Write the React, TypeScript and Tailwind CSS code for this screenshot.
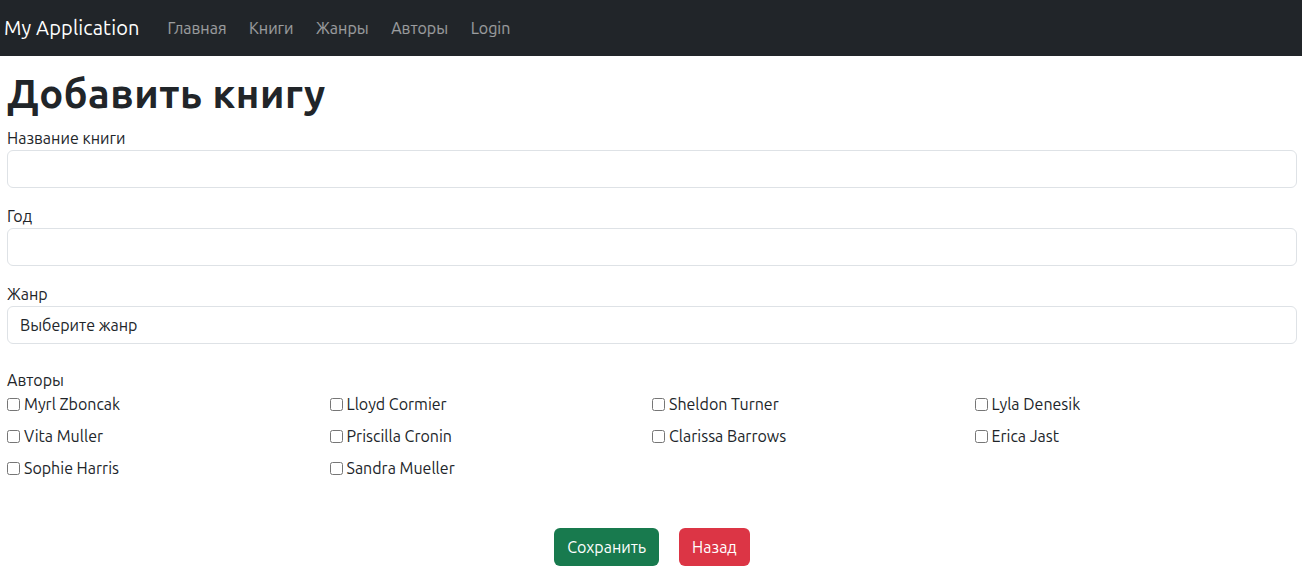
import { useState } from 'react';

const NAV_LINKS = ['Главная', 'Книги', 'Жанры', 'Авторы', 'Login'];

const AUTHORS = [
  'Myrl Zboncak',
  'Lloyd Cormier',
  'Sheldon Turner',
  'Lyla Denesik',
  'Vita Muller',
  'Priscilla Cronin',
  'Clarissa Barrows',
  'Erica Jast',
  'Sophie Harris',
  'Sandra Mueller',
];

const FONT = "font-['Ubuntu','Noto_Sans','Liberation_Sans',sans-serif]";

export default function App() {
  const [title, setTitle] = useState('');
  const [year, setYear] = useState('');
  const [checked, setChecked] = useState<string[]>([]);

  const toggle = (name: string) =>
    setChecked((prev) => (prev.includes(name) ? prev.filter((n) => n !== name) : [...prev, name]));

  return (
    <div className={`${FONT} min-h-[578px] bg-white text-[#212529]`}>
      {/* навбар */}
      <nav className="flex h-14 items-center bg-[#212529] pl-1">
        <span className="mr-7 text-[20px] leading-[30px] tracking-[0.15px] text-white">My Application</span>
        <div className="flex gap-[22.5px]">
          {NAV_LINKS.map((l) => (
            <a key={l} href="#" className="text-[16px] leading-6 text-white/55">
              {l}
            </a>
          ))}
        </div>
      </nav>

      <main className="pl-[7px] pr-[5px]">
        <h1 className="mb-2 mt-[14px] text-[40px] font-bold leading-[48px] tracking-[0.5px]">Добавить книгу</h1>

        <div className="mb-4">
          <label className="block text-[16px] leading-6">Название книги</label>
          <input
            value={title}
            onChange={(e) => setTitle(e.target.value)}
            className="block h-[38px] w-full rounded-[6px] border border-[#dee2e6] px-3 outline-none"
          />
        </div>

        <div className="mb-4">
          <label className="block text-[16px] leading-6">Год</label>
          <input
            value={year}
            onChange={(e) => setYear(e.target.value)}
            className="block h-[38px] w-full rounded-[6px] border border-[#dee2e6] px-3 outline-none"
          />
        </div>

        <div className="mb-6">
          <label className="block text-[16px] leading-6">Жанр</label>
          <div className="flex h-[38px] w-full items-center rounded-[6px] border border-[#dee2e6] px-3 text-[16px]">
            Выберите жанр
          </div>
        </div>

        <div>
          <label className="block text-[16px] leading-6">Авторы</label>
          <div className="grid grid-cols-4">
            {AUTHORS.map((a) => (
              <label key={a} className="mb-2 flex h-6 items-center text-[16px] leading-6">
                <input
                  type="checkbox"
                  checked={checked.includes(a)}
                  onChange={() => toggle(a)}
                  className="mr-1 h-[13px] w-[13px]"
                />
                {a}
              </label>
            ))}
          </div>
        </div>

        <div className="mt-10 flex justify-center gap-5">
          <button className="h-[38px] rounded-[6px] bg-[#187a4e] px-[13px] text-[16px] text-white">Сохранить</button>
          <button className="h-[38px] rounded-[6px] bg-[#dc3545] px-[13px] text-[16px] text-white">Назад</button>
        </div>
      </main>
    </div>
  );
}
